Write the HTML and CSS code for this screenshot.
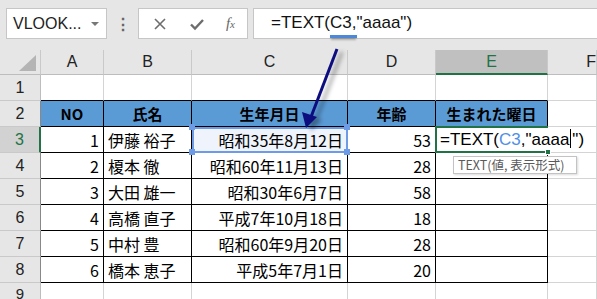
FILE: index.html
```html
<!DOCTYPE html>
<html lang="ja">
<head>
<meta charset="utf-8">
<link rel="stylesheet" href="styles.css">
</head>
<body>
<div class="app">
  <div class="fbar">
    <div class="namebox"><span class="nbtext">VLOOK...</span><span class="nbarrow"></span></div>
    <div class="dots">⋮</div>
    <div class="btns">
      <svg class="ico" width="16" height="16" viewBox="0 0 16 16"><path d="M3 3L13 13M13 3L3 13" stroke="#6d6d6d" stroke-width="1.6" fill="none"/></svg>
      <svg class="ico" width="16" height="16" viewBox="0 0 16 16"><path d="M2 8.5L6 12.5L14 4" stroke="#6d6d6d" stroke-width="2.4" fill="none"/></svg>
      <span class="fx"><i>f</i><i class="x">x</i></span>
    </div>
    <div class="formula">=TEXT(<span class="ref">C3,</span>"aaaa")</div>
  </div>
  <div class="sheet">
    <div class="c corner"><span class="tri"></span></div>
    <div class="c ch">A</div>
    <div class="c ch">B</div>
    <div class="c ch">C</div>
    <div class="c ch">D</div>
    <div class="c ch chsel">E</div>
    <div class="c ch chf">F</div>

    <div class="c rh">1</div>
    <div class="c tb"></div><div class="c tb"></div><div class="c tb"></div><div class="c tb"></div><div class="c tb"></div><div class="c"></div>

    <div class="c rh rht">2</div>
    <div class="c t hd">NO</div>
    <div class="c t hd">氏名</div>
    <div class="c t hd">生年月日</div>
    <div class="c t hd">年齢</div>
    <div class="c t hd">生まれた曜日</div>
    <div class="c"></div>

    <div class="c rh rht rhsel">3</div>
    <div class="c t r">1</div>
    <div class="c t l">伊藤 裕子</div>
    <div class="c t r sel"><span class="hd1"></span><span class="hd2"></span><span class="hd3"></span><span class="hd4"></span>昭和35年8月12日</div>
    <div class="c t r">53</div>
    <div class="c t active"><span class="edit">=TEXT(<span class="blue">C3</span>,"aaaa<span class="caret"></span>")</span><span class="fill"></span></div>
    <div class="c"></div>

    <div class="c rh rht">4</div>
    <div class="c t r">2</div>
    <div class="c t l">榎本 徹</div>
    <div class="c t r">昭和60年11月13日</div>
    <div class="c t r">28</div>
    <div class="c t"></div>
    <div class="c"></div>

    <div class="c rh rht">5</div>
    <div class="c t r">3</div>
    <div class="c t l">大田 雄一</div>
    <div class="c t r">昭和30年6月7日</div>
    <div class="c t r">58</div>
    <div class="c t"></div>
    <div class="c"></div>

    <div class="c rh rht">6</div>
    <div class="c t r">4</div>
    <div class="c t l">高橋 直子</div>
    <div class="c t r">平成7年10月18日</div>
    <div class="c t r">18</div>
    <div class="c t"></div>
    <div class="c"></div>

    <div class="c rh rht">7</div>
    <div class="c t r">5</div>
    <div class="c t l">中村 豊</div>
    <div class="c t r">昭和60年9月20日</div>
    <div class="c t r">28</div>
    <div class="c t"></div>
    <div class="c"></div>

    <div class="c rh rht">8</div>
    <div class="c t r">6</div>
    <div class="c t l">橋本 恵子</div>
    <div class="c t r">平成5年7月1日</div>
    <div class="c t r">20</div>
    <div class="c t"></div>
    <div class="c"></div>

    <div class="c rh rlast">9</div>
    <div class="c"></div><div class="c"></div><div class="c"></div><div class="c"></div><div class="c"></div><div class="c"></div>
  </div>
  <div class="tip">TEXT(値, 表示形式)</div>
  <svg class="arrow" width="597" height="140" viewBox="0 0 597 140">
    <line x1="337" y1="49" x2="311" y2="117" stroke="#0d0d80" stroke-width="3"/>
    <polygon points="306,128 302,112 317,117" fill="#0d0d80"/>
  </svg>
</div>
</body>
</html>
```
FILE: styles.css
```css
* { box-sizing: border-box; }
html, body { margin: 0; padding: 0; }
body { width: 597px; height: 299px; overflow: hidden; background: #e6e6e6; font-family: "Noto Sans CJK JP", sans-serif; }
.app { position: relative; width: 597px; height: 299px; }

.fbar { height: 50px; display: flex; align-items: flex-start; padding: 8px 0 0 6px; }
.namebox { width: 101px; height: 31px; background: #fff; border: 1px solid #c6c6c6; display: flex; align-items: center; padding: 0 0 0 6px; }
.nbtext { flex: 1; font-family: "Liberation Sans", sans-serif; font-size: 16px; color: #222; }
.nbarrow { width: 0; height: 0; border-left: 4px solid transparent; border-right: 4px solid transparent; border-top: 4px solid #777; margin-right: 7px; }
.dots { width: 31px; height: 31px; text-align: center; font-size: 16px; line-height: 31px; color: #666; font-weight: bold; }
.btns { width: 110px; height: 31px; background: #fff; border: 1px solid #c6c6c6; display: flex; align-items: center; justify-content: space-between; padding: 0 12px 0 13px; }
.fx { font-family: "Liberation Serif", serif; font-size: 15px; color: #666; }
.fx .x { font-size: 11px; }
.formula { margin-left: 5px; flex: 1; height: 31px; background: #fff; border: 1px solid #c6c6c6; border-right: none; padding-left: 17px; font-family: "Liberation Sans", sans-serif; font-size: 17px; line-height: 28px; color: #111; }
.ref { display: inline-block; line-height: 24px; border-bottom: 3px solid #4d88d8; box-shadow: 0 3px 2px -1px rgba(0,0,0,0.25); }

.sheet { display: grid; grid-template-columns: 41px 63px 88px 156px 88px 112px 49px; grid-template-rows: 25px repeat(8, 26px) 24px; background: #fff; }
.c { border-right: 1px solid #d4d4d4; border-bottom: 1px solid #d4d4d4; font-size: 16px; white-space: nowrap; display: flex; align-items: center; color: #000; }
.corner { background: #e6e6e6; border-right: 1px solid #c9c9c9; border-bottom: 1px solid #bdbdbd; position: relative; }
.tri { position: absolute; right: 4px; bottom: 3px; width: 0; height: 0; border-left: 17px solid transparent; border-bottom: 16px solid #b4b4b4; }
.ch { background: #e6e6e6; border-right: 1px solid #c9c9c9; border-bottom: 1px solid #bdbdbd; justify-content: center; font-family: "Liberation Sans", sans-serif; font-size: 16px; color: #222; }
.chsel { background: #c0c0c0; border-bottom: 2px solid #217346; color: #217346; }
.chf { justify-content: flex-end; }
.rh { background: #e6e6e6; border-right: 1px solid #bdbdbd; border-bottom: 1px solid #c9c9c9; justify-content: center; font-family: "Liberation Sans", sans-serif; font-size: 16px; color: #222; }
.rlast { align-items: flex-start; padding-top: 2px; font-size: 15px; }
.rht { border-right-color: #888; }
.rhsel { background: #d2d2d2; color: #217346; border-right: 2px solid #217346; }
.tb { border-bottom-color: #000; }
.t { border-right-color: #000; border-bottom-color: #000; }
.hd { background: #5b9bd5; justify-content: center; font-weight: bold; font-size: 15px; }
.r { justify-content: flex-end; padding-right: 4px; }
.l { padding-left: 4px; }
.sel { position: relative; background: #eef3fc; outline: 2px solid #6d9be6; outline-offset: -2px; }
.sel span { position: absolute; width: 6px; height: 6px; background: #6d9be6; }
.hd1 { left: -3px; top: -3px; }
.hd2 { right: -3px; top: -3px; }
.hd3 { left: -3px; bottom: -3px; }
.hd4 { right: -3px; bottom: -3px; }
.active { position: relative; z-index: 2; overflow: visible; border-top: 2px solid #217346; border-left: 2px solid #217346; border-bottom: 2px solid #217346; border-right: none; margin-top: -1px; margin-left: -1px; height: 27px; padding-left: 3px; font-family: "Liberation Sans", sans-serif; font-size: 17px; }
.edit { background: #fff; padding-right: 2px; }
.blue { color: #4f8fe6; }
.caret { display: inline-block; width: 1px; height: 19px; background: #000; vertical-align: -3px; margin: 0 1px; }
.fill { position: absolute; right: -3px; bottom: -4px; width: 6px; height: 6px; background: #217346; border: 1px solid #fff; }

.tip { position: absolute; left: 453px; top: 156px; width: 124px; height: 18px; background: #fff; border: 1px solid #c3c3c3; box-shadow: 1px 1px 2px rgba(0,0,0,0.15); font-size: 12.5px; line-height: 16px; color: #5a5a5a; padding-left: 4px; z-index: 3; }
.arrow { position: absolute; left: 0; top: 0; z-index: 4; filter: drop-shadow(5px 3px 2px rgba(0,0,0,0.35)); }
```
